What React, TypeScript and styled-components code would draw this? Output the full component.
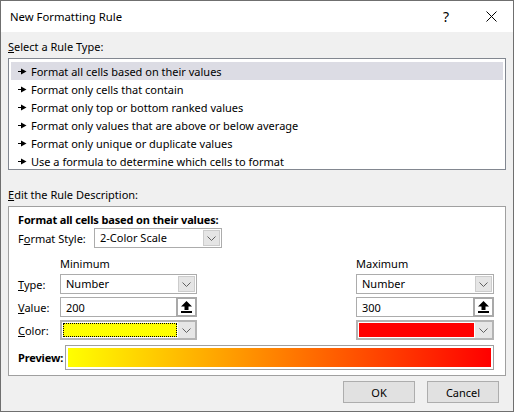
import React from "react";
import styled, { createGlobalStyle } from "styled-components";

const GlobalStyle = createGlobalStyle`
  html, body {
    margin: 0;
    padding: 0;
    background: #ffffff;
  }
  body {
    font-family: "Noto Sans", "Open Sans", sans-serif;
    font-size: 11px;
    color: #000;
  }
`;

const Dialog = styled.div`
  width: 514px;
  height: 412px;
  box-sizing: border-box;
  border: 1px solid #6f6f6f;
  display: flex;
  flex-direction: column;
  background: #f0f0f0;
`;

const TitleBar = styled.div`
  height: 31px;
  flex-shrink: 0;
  background: #ffffff;
  display: flex;
  align-items: center;
  padding-left: 9px;
  font-size: 11.3px;
`;

const Title = styled.div`
  flex: 1;
`;

const TitleButton = styled.div<{ $w: number }>`
  width: ${(p) => p.$w}px;
  height: 31px;
  display: flex;
  align-items: center;
  justify-content: center;
  font-size: 14px;
`;

const Body = styled.div`
  flex: 1;
  display: flex;
  flex-direction: column;
  padding: 0 7px;
`;

const SectionLabel = styled.div<{ $top: number }>`
  margin-top: ${(p) => p.$top}px;
  line-height: 16px;
  height: 16px;
`;

const Key = styled.span`
  text-decoration: underline;
`;

const RuleList = styled.div`
  margin-top: 3px;
  height: 112px;
  box-sizing: border-box;
  border: 1px solid #828790;
  background: #ffffff;
  padding: 3px 2px 2px;
`;

const RuleRow = styled.div<{ $selected?: boolean }>`
  height: 18px;
  display: flex;
  align-items: center;
  gap: 4px;
  padding-left: 7px;
  background: ${(p) => (p.$selected ? "#dcdce4" : "transparent")};
`;

const DescBox = styled.div`
  margin-top: 3px;
  height: 170px;
  box-sizing: border-box;
  border: 1px solid #a0a0a0;
  background: #ffffff;
  padding: 6px 11px 0 9px;
  display: flex;
  flex-direction: column;
`;

const Heading = styled.div`
  font-weight: 700;
  letter-spacing: -0.15px;
  line-height: 14px;
  height: 14px;
`;

const StyleRow = styled.div`
  margin-top: 1px;
  display: flex;
  align-items: center;
`;

const StyleLabel = styled.div`
  width: 76px;
`;

const ScaleGrid = styled.div`
  margin-top: 9px;
  display: grid;
  grid-template-columns: 42px 137px 1fr 138px;
  grid-template-rows: 14px 20px 20px 20px;
  row-gap: 3px;
  align-items: center;
`;

const ColHead = styled.div<{ $col: number }>`
  grid-column: ${(p) => p.$col};
  line-height: 14px;
  align-self: start;
  margin-top: 0;
`;

const RowLabel = styled.div`
  grid-column: 1;
`;

const Select = styled.div<{ $w?: number; $col?: number }>`
  ${(p) => (p.$col ? `grid-column: ${p.$col};` : "")}
  ${(p) => (p.$w ? `width: ${p.$w}px;` : "")}
  height: 20px;
  box-sizing: border-box;
  border: 1px solid #acacac;
  background: #ffffff;
  display: flex;
  align-items: center;
  padding: 1px;
`;

const SelectText = styled.div`
  flex: 1;
  padding-left: 4px;
  line-height: 16px;
`;

const ArrowBtn = styled.div`
  width: 17px;
  height: 16px;
  box-sizing: border-box;
  border: 1px solid #cccccc;
  background: #e5e5e5;
  display: flex;
  align-items: center;
  justify-content: center;
`;

const ValueBox = styled.div<{ $col: number }>`
  grid-column: ${(p) => p.$col};
  height: 20px;
  display: flex;
`;

const ValueInput = styled.div`
  flex: 1;
  box-sizing: border-box;
  border: 1px solid #acacac;
  border-right: none;
  display: flex;
  align-items: center;
  padding-left: 5px;
`;

const PickBtn = styled.div`
  width: 21px;
  box-sizing: border-box;
  border: 2px solid #a9a9a9;
  background: #ffffff;
  display: flex;
  align-items: center;
  justify-content: center;
`;

const ColorSelect = styled.div<{ $col: number }>`
  grid-column: ${(p) => p.$col};
  height: 20px;
  box-sizing: border-box;
  border: 2px solid #b4b4b4;
  background: #ffffff;
  display: flex;
  align-items: stretch;
`;

const Swatch = styled.div<{ $color: string; $focus?: boolean }>`
  flex: 1;
  margin: 1px;
  background: ${(p) => p.$color};
  outline: ${(p) => (p.$focus ? "1px dotted #000" : "none")};
  outline-offset: -1px;
`;

const ColorArrow = styled.div`
  width: 17px;
  background: #e6e6e6;
  display: flex;
  align-items: center;
  justify-content: center;
`;

const PreviewRow = styled.div`
  margin-top: 5px;
  display: flex;
  align-items: center;
`;

const PreviewLabel = styled.div`
  width: 47px;
  font-weight: 700;
  letter-spacing: -0.15px;
`;

const PreviewFrame = styled.div`
  width: 430px;
  height: 25px;
  box-sizing: border-box;
  border: 1px solid #a0a0a0;
  padding: 2px;
`;

const Gradient = styled.div`
  height: 100%;
  background: linear-gradient(to right, #ffff00, #ff0000);
`;

const Footer = styled.div`
  margin-top: 5px;
  display: flex;
  justify-content: flex-end;
  gap: 12px;
  padding-right: 7px;
`;

const Button = styled.div`
  width: 72px;
  height: 22px;
  box-sizing: border-box;
  border: 1px solid #adadad;
  background: #e1e1e1;
  display: flex;
  align-items: center;
  justify-content: center;
`;

const Bullet = () => (
  <svg width="9" height="7" viewBox="0 0 9 7">
    <rect x="0" y="3" width="4" height="1" fill="#000" />
    <polygon points="3,0.5 8.5,3.5 3,6.5" fill="#000" />
  </svg>
);

const Chevron = () => (
  <svg width="9" height="5" viewBox="0 0 9 5">
    <polyline points="0.5,0.5 4.5,4.5 8.5,0.5" fill="none" stroke="#606060" strokeWidth="1" />
  </svg>
);

const UpArrow = () => (
  <svg width="11" height="12" viewBox="0 0 11 12">
    <polygon points="5.5,0 11,5.5 7.5,5.5 7.5,9 3.5,9 3.5,5.5 0,5.5" fill="#000" />
    <rect x="0" y="10" width="11" height="2" fill="#000" />
  </svg>
);

const Close = () => (
  <svg width="11" height="11" viewBox="0 0 11 11">
    <path d="M0.5 0.5 L10.5 10.5 M10.5 0.5 L0.5 10.5" stroke="#000" strokeWidth="1" />
  </svg>
);

const rules = [
  "Format all cells based on their values",
  "Format only cells that contain",
  "Format only top or bottom ranked values",
  "Format only values that are above or below average",
  "Format only unique or duplicate values",
  "Use a formula to determine which cells to format",
];

export default function App() {
  return (
    <>
      <GlobalStyle />
      <Dialog>
        <TitleBar>
          <Title>New Formatting Rule</Title>
          <TitleButton $w={46}>?</TitleButton>
          <TitleButton $w={44}>
            <Close />
          </TitleButton>
        </TitleBar>
        <Body>
          <SectionLabel $top={7}>
            <Key>S</Key>elect a Rule Type:
          </SectionLabel>
          <RuleList>
            {rules.map((r, i) => (
              <RuleRow key={r} $selected={i === 0}>
                <Bullet />
                <span>{r}</span>
              </RuleRow>
            ))}
          </RuleList>
          <SectionLabel $top={17}>
            <Key>E</Key>dit the Rule Description:
          </SectionLabel>
          <DescBox>
            <Heading>Format all cells based on their values:</Heading>
            <StyleRow>
              <StyleLabel>
                F<Key>o</Key>rmat Style:
              </StyleLabel>
              <Select $w={128}>
                <SelectText>2-Color Scale</SelectText>
                <ArrowBtn>
                  <Chevron />
                </ArrowBtn>
              </Select>
            </StyleRow>
            <ScaleGrid>
              <ColHead $col={2}>Minimum</ColHead>
              <ColHead $col={4}>Maximum</ColHead>

              <RowLabel>
                <Key>T</Key>ype:
              </RowLabel>
              <Select $col={2}>
                <SelectText>Number</SelectText>
                <ArrowBtn>
                  <Chevron />
                </ArrowBtn>
              </Select>
              <Select $col={4}>
                <SelectText>Number</SelectText>
                <ArrowBtn>
                  <Chevron />
                </ArrowBtn>
              </Select>

              <RowLabel>
                <Key>V</Key>alue:
              </RowLabel>
              <ValueBox $col={2}>
                <ValueInput>200</ValueInput>
                <PickBtn>
                  <UpArrow />
                </PickBtn>
              </ValueBox>
              <ValueBox $col={4}>
                <ValueInput>300</ValueInput>
                <PickBtn>
                  <UpArrow />
                </PickBtn>
              </ValueBox>

              <RowLabel>
                <Key>C</Key>olor:
              </RowLabel>
              <ColorSelect $col={2}>
                <Swatch $color="#ffff00" $focus />
                <ColorArrow>
                  <Chevron />
                </ColorArrow>
              </ColorSelect>
              <ColorSelect $col={4}>
                <Swatch $color="#ff0000" />
                <ColorArrow>
                  <Chevron />
                </ColorArrow>
              </ColorSelect>
            </ScaleGrid>
            <PreviewRow>
              <PreviewLabel>Preview:</PreviewLabel>
              <PreviewFrame>
                <Gradient />
              </PreviewFrame>
            </PreviewRow>
          </DescBox>
          <Footer>
            <Button>OK</Button>
            <Button>Cancel</Button>
          </Footer>
        </Body>
      </Dialog>
    </>
  );
}
